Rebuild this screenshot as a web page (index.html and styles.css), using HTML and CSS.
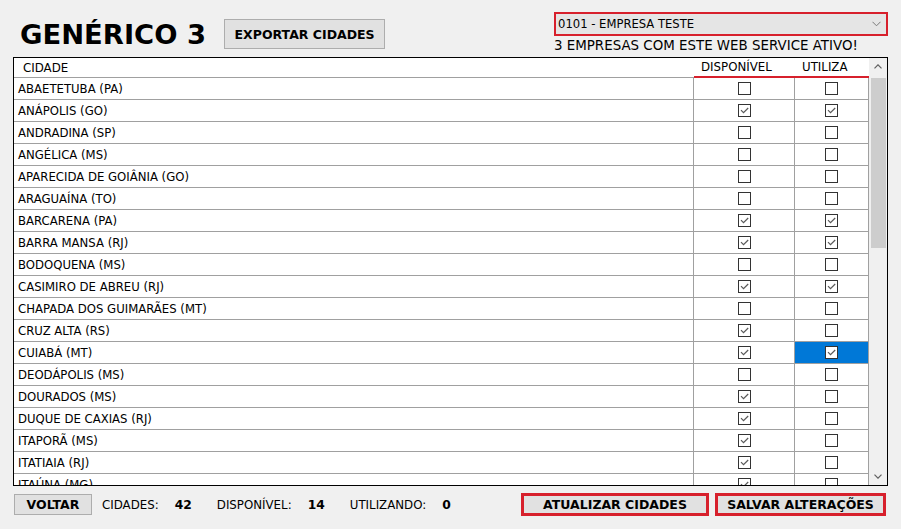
FILE: index.html
```html
<!DOCTYPE html>
<html lang="pt-BR">
<head>
<meta charset="utf-8">
<title>Genérico 3</title>
<link rel="stylesheet" href="styles.css">
</head>
<body>
<div class="page">
  <header class="top">
    <div class="title-group">
      <h1 class="title">GENÉRICO 3</h1>
      <button class="btn btn-export">EXPORTAR CIDADES</button>
    </div>
    <div class="right">
      <div class="select">
        <span class="select-text">0101 - EMPRESA TESTE</span>
        <svg class="chev" width="9" height="6" viewBox="0 0 9 6"><polyline points="0.5,0.8 4.5,4.8 8.5,0.8" fill="none" stroke="#7a7a7a" stroke-width="1"/></svg>
      </div>
      <div class="info">3 EMPRESAS COM ESTE WEB SERVICE ATIVO!</div>
    </div>
  </header>

  <div class="grid">
    <div class="grid-area">
      <table class="tbl">
        <colgroup><col class="c-city"><col class="c-d"><col class="c-u"></colgroup>
        <thead>
          <tr>
            <th class="h-city">CIDADE</th>
            <th class="h-red">DISPONÍVEL</th>
            <th class="h-red">UTILIZA</th>
          </tr>
        </thead>
        <tbody>
          <tr><td>ABAETETUBA (PA)</td><td class="ck"><span class="box"></span></td><td class="ck"><span class="box"></span></td></tr>
          <tr><td>ANÁPOLIS (GO)</td><td class="ck"><span class="box on"><svg viewBox="0 0 11 11"><polyline points="2,5.2 4.5,7.7 9.2,3"/></svg></span></td><td class="ck"><span class="box on"><svg viewBox="0 0 11 11"><polyline points="2,5.2 4.5,7.7 9.2,3"/></svg></span></td></tr>
          <tr><td>ANDRADINA (SP)</td><td class="ck"><span class="box"></span></td><td class="ck"><span class="box"></span></td></tr>
          <tr><td>ANGÉLICA (MS)</td><td class="ck"><span class="box"></span></td><td class="ck"><span class="box"></span></td></tr>
          <tr><td>APARECIDA DE GOIÂNIA (GO)</td><td class="ck"><span class="box"></span></td><td class="ck"><span class="box"></span></td></tr>
          <tr><td>ARAGUAÍNA (TO)</td><td class="ck"><span class="box"></span></td><td class="ck"><span class="box"></span></td></tr>
          <tr><td>BARCARENA (PA)</td><td class="ck"><span class="box on"><svg viewBox="0 0 11 11"><polyline points="2,5.2 4.5,7.7 9.2,3"/></svg></span></td><td class="ck"><span class="box on"><svg viewBox="0 0 11 11"><polyline points="2,5.2 4.5,7.7 9.2,3"/></svg></span></td></tr>
          <tr><td>BARRA MANSA (RJ)</td><td class="ck"><span class="box on"><svg viewBox="0 0 11 11"><polyline points="2,5.2 4.5,7.7 9.2,3"/></svg></span></td><td class="ck"><span class="box on"><svg viewBox="0 0 11 11"><polyline points="2,5.2 4.5,7.7 9.2,3"/></svg></span></td></tr>
          <tr><td>BODOQUENA (MS)</td><td class="ck"><span class="box"></span></td><td class="ck"><span class="box"></span></td></tr>
          <tr><td>CASIMIRO DE ABREU (RJ)</td><td class="ck"><span class="box on"><svg viewBox="0 0 11 11"><polyline points="2,5.2 4.5,7.7 9.2,3"/></svg></span></td><td class="ck"><span class="box on"><svg viewBox="0 0 11 11"><polyline points="2,5.2 4.5,7.7 9.2,3"/></svg></span></td></tr>
          <tr><td>CHAPADA DOS GUIMARÃES (MT)</td><td class="ck"><span class="box"></span></td><td class="ck"><span class="box"></span></td></tr>
          <tr><td>CRUZ ALTA (RS)</td><td class="ck"><span class="box on"><svg viewBox="0 0 11 11"><polyline points="2,5.2 4.5,7.7 9.2,3"/></svg></span></td><td class="ck"><span class="box"></span></td></tr>
          <tr><td>CUIABÁ (MT)</td><td class="ck"><span class="box on"><svg viewBox="0 0 11 11"><polyline points="2,5.2 4.5,7.7 9.2,3"/></svg></span></td><td class="ck sel"><span class="box on"><svg viewBox="0 0 11 11"><polyline points="2,5.2 4.5,7.7 9.2,3"/></svg></span></td></tr>
          <tr><td>DEODÁPOLIS (MS)</td><td class="ck"><span class="box"></span></td><td class="ck"><span class="box"></span></td></tr>
          <tr><td>DOURADOS (MS)</td><td class="ck"><span class="box on"><svg viewBox="0 0 11 11"><polyline points="2,5.2 4.5,7.7 9.2,3"/></svg></span></td><td class="ck"><span class="box"></span></td></tr>
          <tr><td>DUQUE DE CAXIAS (RJ)</td><td class="ck"><span class="box on"><svg viewBox="0 0 11 11"><polyline points="2,5.2 4.5,7.7 9.2,3"/></svg></span></td><td class="ck"><span class="box"></span></td></tr>
          <tr><td>ITAPORÃ (MS)</td><td class="ck"><span class="box on"><svg viewBox="0 0 11 11"><polyline points="2,5.2 4.5,7.7 9.2,3"/></svg></span></td><td class="ck"><span class="box"></span></td></tr>
          <tr><td>ITATIAIA (RJ)</td><td class="ck"><span class="box on"><svg viewBox="0 0 11 11"><polyline points="2,5.2 4.5,7.7 9.2,3"/></svg></span></td><td class="ck"><span class="box"></span></td></tr>
          <tr><td>ITAÚNA (MG)</td><td class="ck"><span class="box on"><svg viewBox="0 0 11 11"><polyline points="2,5.2 4.5,7.7 9.2,3"/></svg></span></td><td class="ck"><span class="box"></span></td></tr>
        </tbody>
      </table>
    </div>
    <div class="scrollbar">
      <div class="arrow">
        <svg width="8" height="5" viewBox="0 0 8 5"><polyline points="0.5,4.3 4,0.8 7.5,4.3" fill="none" stroke="#606060" stroke-width="1.2"/></svg>
      </div>
      <div class="track"><div class="thumb"></div></div>
      <div class="arrow">
        <svg width="8" height="5" viewBox="0 0 8 5"><polyline points="0.5,0.7 4,4.2 7.5,0.7" fill="none" stroke="#606060" stroke-width="1.2"/></svg>
      </div>
    </div>
  </div>

  <footer class="bottom">
    <button class="btn btn-back">VOLTAR</button>
    <div class="stats">
      <span class="stat"><span class="lbl">CIDADES:</span><b>42</b></span>
      <span class="stat"><span class="lbl">DISPONÍVEL:</span><b>14</b></span>
      <span class="stat"><span class="lbl">UTILIZANDO:</span><b>0</b></span>
    </div>
    <div class="actions">
      <button class="btn btn-red btn-update">ATUALIZAR CIDADES</button>
      <button class="btn btn-red btn-save">SALVAR ALTERAÇÕES</button>
    </div>
  </footer>
</div>
</body>
</html>
```

FILE: styles.css
```css
* { box-sizing: border-box; }
html, body { margin: 0; padding: 0; }
body {
  background: #f0f0f0;
  font-family: "DejaVu Sans", Verdana, sans-serif;
  color: #000;
}
.page {
  width: 901px;
  height: 529px;
  overflow: hidden;
}

/* top */
.top {
  display: flex;
  height: 57px;
}
.title-group {
  display: flex;
  align-items: flex-start;
  margin-top: 19px;
  margin-left: 20px;
  gap: 18px;
}
.title {
  margin: 0;
  font-size: 27.4px;
  line-height: 32px;
  font-weight: bold;
}
.btn {
  font-family: "DejaVu Sans", Verdana, sans-serif;
  font-weight: bold;
  font-size: 12.5px;
  color: #000;
  background: #e1e1e1;
  border: 1px solid #adadad;
  padding: 0;
  margin: 0;
  display: flex;
  align-items: center;
  justify-content: center;
}
.btn-export {
  width: 161px;
  height: 30px;
}
.right {
  margin-left: auto;
  margin-right: 13px;
  margin-top: 12px;
  display: flex;
  flex-direction: column;
  align-items: flex-start;
}
.select {
  width: 334px;
  height: 24px;
  border: 2px solid #d7202c;
  background: #e5e5e5;
  display: flex;
  align-items: center;
  padding: 0 5px 0 2px;
}
.select-text {
  font-size: 11.6px;
  flex: 1;
}
.chev { display: block; }
.info {
  font-size: 13.4px;
  line-height: 16px;
  margin-top: 2px;
}

/* grid */
.grid {
  margin-left: 13px;
  width: 875px;
  height: 429px;
  border: 1px solid #000;
  background: #fff;
  display: flex;
}
.grid-area {
  width: 855px;
  height: 100%;
  overflow: hidden;
}
.tbl {
  width: 855px;
  table-layout: fixed;
  border-collapse: separate;
  border-spacing: 0;
  font-size: 11.7px;
}
.c-city { width: 680px; }
.c-d { width: 101px; }
.c-u { width: 74px; }
.tbl th {
  height: 20px;
  padding: 0 0 0 7px;
  text-align: left;
  font-weight: normal;
  font-size: 11.8px;
  border-bottom: 1px solid #a0a0a0;
  white-space: nowrap;
}
.tbl th.h-city { padding-left: 9px; }
.tbl th.h-red { border-bottom: 2px solid #d7202c; }
.tbl td {
  height: 22px;
  padding: 0 0 0 4px;
  border-bottom: 1px solid #a0a0a0;
  white-space: nowrap;
}
.tbl td:nth-child(1), .tbl td:nth-child(2), .tbl td:nth-child(3) { border-right: 1px solid #a0a0a0; }
.tbl td.ck {
  padding: 0;
  text-align: center;
  vertical-align: middle;
  line-height: 0;
}
.tbl td.sel { background: #0078d7; }
.box {
  display: inline-block;
  width: 13px;
  height: 13px;
  border: 1px solid #333;
  background: #fff;
  vertical-align: middle;
}
.box svg {
  display: block;
  width: 11px;
  height: 11px;
}
.box polyline {
  fill: none;
  stroke: #5a5a5a;
  stroke-width: 1.2;
}

/* scrollbar */
.scrollbar {
  width: 18px;
  height: 100%;
  background: #f0f0f0;
  display: flex;
  flex-direction: column;
}
.arrow {
  height: 17px;
  display: flex;
  align-items: center;
  justify-content: center;
}
.track {
  flex: 1;
  padding: 3px 1px 0 1px;
}
.thumb {
  width: 15px;
  height: 170px;
  margin-left: 1px;
  background: #cdcdcd;
}

/* bottom */
.bottom {
  display: flex;
  align-items: center;
  margin-top: 7px;
  padding: 0 15px 0 14px;
  height: 23px;
}
.btn-back {
  width: 78px;
  height: 21px;
}
.stats {
  display: flex;
  margin-left: 10px;
  gap: 25px;
  font-size: 11.8px;
}
.stat { display: flex; gap: 16px; }
.stat b { font-weight: bold; font-size: 12.3px; }
.actions {
  margin-left: auto;
  display: flex;
  gap: 6px;
}
.btn-red {
  border: 3px solid #d7202c;
  height: 23px;
}
.btn-update { width: 188px; }
.btn-save { width: 171px; }
```
